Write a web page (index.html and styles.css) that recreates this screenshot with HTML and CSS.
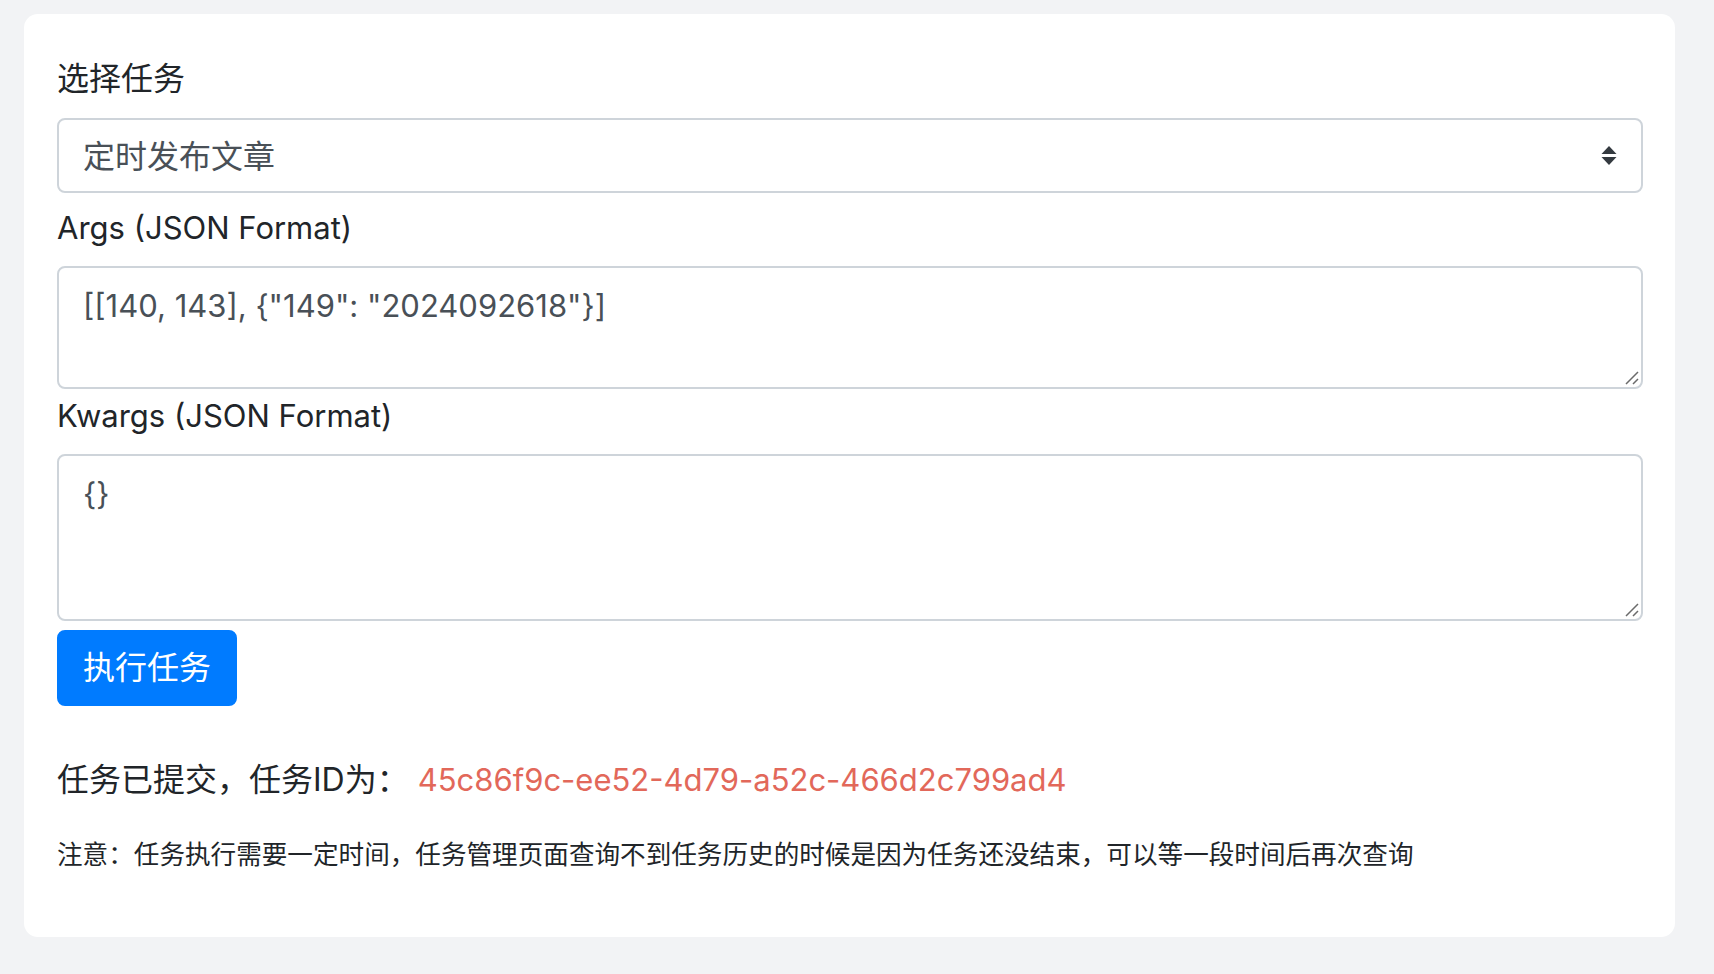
FILE: index.html
```html
<!DOCTYPE html>
<html lang="zh-CN">
<head>
<meta charset="utf-8">
<title>执行任务</title>
<link rel="stylesheet" href="styles.css">
</head>
<body>
<div class="page">
  <div class="card">
    <label class="field-label" for="task">选择任务</label>
    <div class="select-wrap">
      <div class="select" id="task">定时发布文章</div>
      <svg class="select-arrow" width="16" height="20" viewBox="0 0 16 20"><path d="M8 0 L15.5 8 L0.5 8 Z M0.5 11 L15.5 11 L8 19 Z" fill="#343a40"/></svg>
    </div>
    <label class="field-label latin" for="args">Args (JSON Format)</label>
    <div class="area-wrap">
      <div class="textarea rows2" id="args">[[140, 143], {"149": "2024092618"}]</div>
      <svg class="grip" width="16" height="16" viewBox="0 0 16 16"><path d="M14 2 L2 14 M14 9 L9 14" stroke="#6b6b6b" stroke-width="1.5" fill="none"/></svg>
    </div>
    <label class="field-label latin" for="kwargs">Kwargs (JSON Format)</label>
    <div class="area-wrap">
      <div class="textarea rows3" id="kwargs">{}</div>
      <svg class="grip" width="16" height="16" viewBox="0 0 16 16"><path d="M14 2 L2 14 M14 9 L9 14" stroke="#6b6b6b" stroke-width="1.5" fill="none"/></svg>
    </div>
    <div class="actions">
      <button class="btn" type="button">执行任务</button>
    </div>
    <p class="result">任务已提交，任务ID为： <span class="task-id">45c86f9c-ee52-4d79-a52c-466d2c799ad4</span></p>
    <p class="note">注意：任务执行需要一定时间，任务管理页面查询不到任务历史的时候是因为任务还没结束，可以等一段时间后再次查询</p>
  </div>
</div>
</body>
</html>
```

FILE: styles.css
```css
html, body {
  margin: 0;
  padding: 0;
}
body {
  background: #f2f3f5;
  font-family: Inter, "Noto Sans CJK SC", sans-serif;
  color: #212529;
  font-size: 32px;
  line-height: 48px;
}
.page {
  padding: 14px 39px 38px 24px;
}
.card {
  background: #ffffff;
  border-radius: 14px;
  padding: 41px 32px 63px 33px;
  display: flex;
  flex-direction: column;
}
.field-label {
  display: block;
  font-size: 32px;
  line-height: 48px;
  margin-bottom: 15px;
  color: #212529;
}
.field-label.latin {
  font-size: 31px;
  padding-top: 1px;
  height: 47px;
}
.select-wrap {
  position: relative;
  margin-bottom: 10px;
}
.select {
  height: 75px;
  box-sizing: border-box;
  border: 2px solid #ced4da;
  border-radius: 8px;
  padding: 2px 24px 0 24px;
  display: flex;
  align-items: center;
  color: #495057;
  background: #fff;
}
.select-arrow {
  position: absolute;
  right: 26px;
  top: 28px;
}
.area-wrap {
  position: relative;
  margin-bottom: 2px;
}
.textarea {
  box-sizing: border-box;
  border: 2px solid #ced4da;
  border-radius: 8px;
  padding: 14px 24px 10px 24px;
  color: #495057;
  background: #fff;
  font-size: 31px;
}
.rows2 {
  height: 123px;
}
.rows3 {
  height: 167px;
}
.grip {
  position: absolute;
  right: 3px;
  bottom: 3px;
}
.actions {
  margin-top: 7px;
  display: flex;
}
.btn {
  font-family: Inter, "Noto Sans CJK SC", sans-serif;
  font-size: 32px;
  line-height: 48px;
  height: 76px;
  box-sizing: border-box;
  padding: 12px 24px;
  border: 2px solid #007bff;
  background: #007bff;
  color: #fff;
  border-radius: 8px;
}
.result {
  margin: 50px 0 0 0;
  font-size: 32px;
  line-height: 48px;
  color: #212529;
}
.task-id {
  color: #e2685a;
  font-size: 31px;
  line-height: 48px;
}
.note {
  margin: 32px 0 0 0;
  font-size: 25.6px;
  line-height: 38px;
  color: #212529;
}
```
